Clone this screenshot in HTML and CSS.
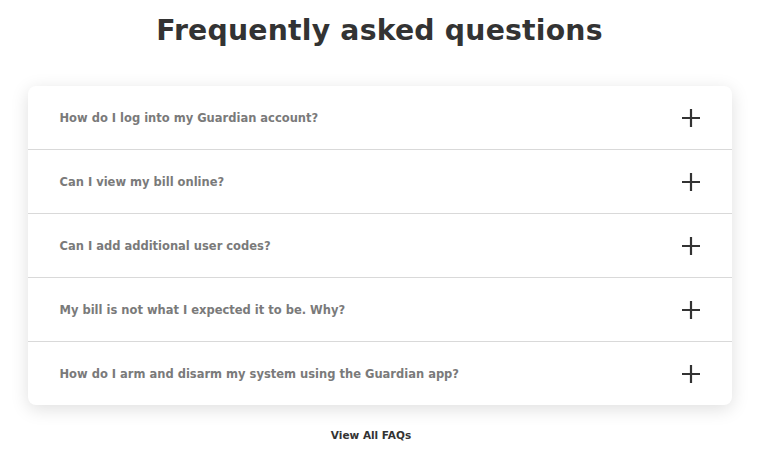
FILE: index.html
```html
<!DOCTYPE html>
<html lang="en">
<head>
<meta charset="utf-8">
<title>FAQ</title>
<link rel="stylesheet" href="styles.css">
</head>
<body>
<main class="faq">
  <h1 class="faq-title">Frequently asked questions</h1>
  <ul class="faq-list">
    <li class="faq-item"><span class="faq-q">How do I log into my Guardian account?</span><svg class="plus" viewBox="0 0 20 20"><path d="M10 1v18M1 10h18"/></svg></li>
    <li class="faq-item"><span class="faq-q">Can I view my bill online?</span><svg class="plus" viewBox="0 0 20 20"><path d="M10 1v18M1 10h18"/></svg></li>
    <li class="faq-item"><span class="faq-q">Can I add additional user codes?</span><svg class="plus" viewBox="0 0 20 20"><path d="M10 1v18M1 10h18"/></svg></li>
    <li class="faq-item"><span class="faq-q">My bill is not what I expected it to be. Why?</span><svg class="plus" viewBox="0 0 20 20"><path d="M10 1v18M1 10h18"/></svg></li>
    <li class="faq-item"><span class="faq-q">How do I arm and disarm my system using the Guardian app?</span><svg class="plus" viewBox="0 0 20 20"><path d="M10 1v18M1 10h18"/></svg></li>
  </ul>
  <a class="faq-all" href="#">View All FAQs</a>
</main>
</body>
</html>
```
FILE: styles.css
```css
html, body { margin: 0; padding: 0; background: #fff; }
body { font-family: "DejaVu Sans", "Noto Sans", sans-serif; }
.faq { display: flex; flex-direction: column; align-items: center; padding-top: 12px; }
.faq-title { margin: 0; font-size: 28.3px; line-height: 38px; font-weight: 700; color: #333; letter-spacing: 0.2px; }
.faq-list { list-style: none; margin: 36px 0 0; padding: 0; width: 704px; background: #fff; border-radius: 8px; box-shadow: 0 4px 18px rgba(0,0,0,0.13); }
.faq-item { display: flex; align-items: center; justify-content: space-between; height: 63px; padding: 0 31px 0 32px; border-bottom: 1px solid #d9d9d9; }
.faq-item:last-child { border-bottom: none; }
.faq-q { font-size: 11.5px; font-weight: 700; color: #7a7a7a; }
.plus { width: 20px; height: 20px; stroke: #333; stroke-width: 2.2; fill: none; }
.faq-all { margin-top: 24px; margin-right: 17px; font-size: 10.5px; font-weight: 700; color: #333; text-decoration: none; }
```
